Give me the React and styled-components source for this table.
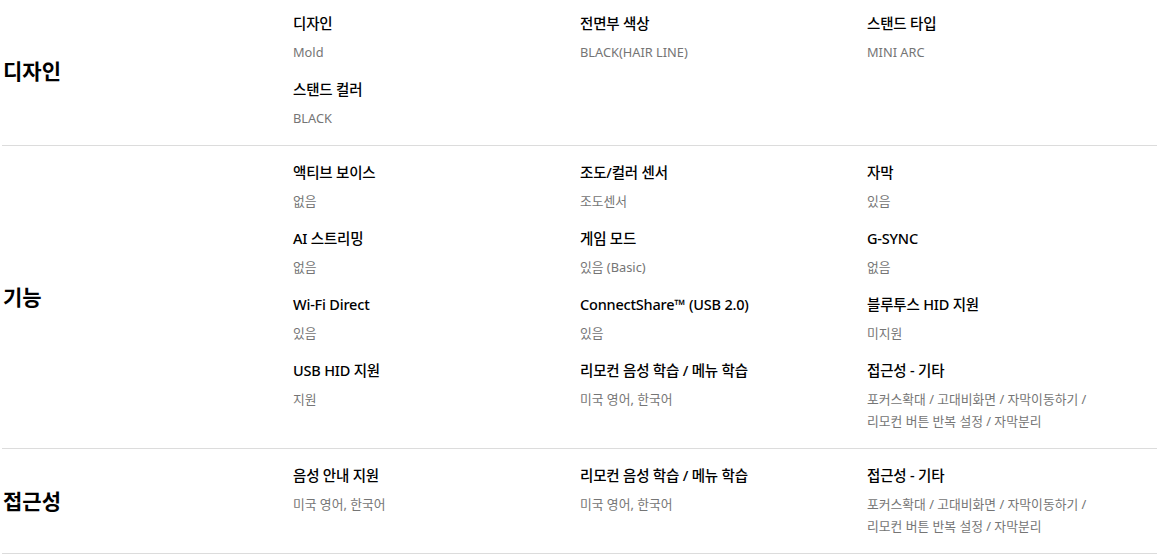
import React from "react";
import styled, { createGlobalStyle } from "styled-components";

const Global = createGlobalStyle`
  html, body { margin: 0; padding: 0; background: #fff; }
  body {
    font-family: "Noto Sans", "Noto Sans CJK KR", sans-serif;
    color: #000;
    overflow: hidden;
  }
`;

const Page = styled.div`
  margin: -3px 0 0 2px;
  width: 1155px;
`;

const Section = styled.section`
  display: flex;
  align-items: center;
  padding: 14px 0 16px;
  border-bottom: 1px solid #dcdcdc;
`;

const Label = styled.h2`
  flex: 0 0 290px;
  margin: 0;
  padding-left: 1px;
  font-family: "Noto Sans CJK KR", sans-serif;
  font-size: 21px;
  font-weight: 700;
  line-height: 30px;
`;

const Grid = styled.div`
  flex: 1;
  display: grid;
  grid-template-columns: repeat(3, 287px);
  row-gap: 14px;
`;

const Item = styled.div`
  display: flex;
  flex-direction: column;
`;

const Title = styled.div`
  font-family: "Noto Sans", "Noto Sans CJK KR", sans-serif;
  font-size: 14.5px;
  font-weight: 500;
  line-height: 24px;
  letter-spacing: -0.2px;
  margin-bottom: 6px;
  white-space: nowrap;
`;

const Value = styled.div`
  font-family: "Noto Sans", "Noto Sans CJK KR", sans-serif;
  font-size: 12.8px;
  font-weight: 400;
  line-height: 22px;
  color: #757575;
  white-space: nowrap;
`;

const ACC = ["포커스확대 / 고대비화면 / 자막이동하기 /", "리모컨 버튼 반복 설정 / 자막분리"];

const sections = [
  {
    label: "디자인",
    items: [
      ["디자인", ["Mold"]],
      ["전면부 색상", ["BLACK(HAIR LINE)"]],
      ["스탠드 타입", ["MINI ARC"]],
      ["스탠드 컬러", ["BLACK"]],
    ],
  },
  {
    label: "기능",
    items: [
      ["액티브 보이스", ["없음"]],
      ["조도/컬러 센서", ["조도센서"]],
      ["자막", ["있음"]],
      ["AI 스트리밍", ["없음"]],
      ["게임 모드", ["있음 (Basic)"]],
      ["G-SYNC", ["없음"]],
      ["Wi-Fi Direct", ["있음"]],
      ["ConnectShare™ (USB 2.0)", ["있음"]],
      ["블루투스 HID 지원", ["미지원"]],
      ["USB HID 지원", ["지원"]],
      ["리모컨 음성 학습 / 메뉴 학습", ["미국 영어, 한국어"]],
      ["접근성 - 기타", ACC],
    ],
  },
  {
    label: "접근성",
    items: [
      ["음성 안내 지원", ["미국 영어, 한국어"]],
      ["리모컨 음성 학습 / 메뉴 학습", ["미국 영어, 한국어"]],
      ["접근성 - 기타", ACC],
    ],
  },
];

export default function App() {
  return (
    <>
      <Global />
      <Page>
        {sections.map((s) => (
          <Section key={s.label}>
            <Label>{s.label}</Label>
            <Grid>
              {s.items.map(([t, v], i) => (
                <Item key={i}>
                  <Title>{t}</Title>
                  {v.map((line, j) => (
                    <Value key={j}>{line}</Value>
                  ))}
                </Item>
              ))}
            </Grid>
          </Section>
        ))}
      </Page>
    </>
  );
}
